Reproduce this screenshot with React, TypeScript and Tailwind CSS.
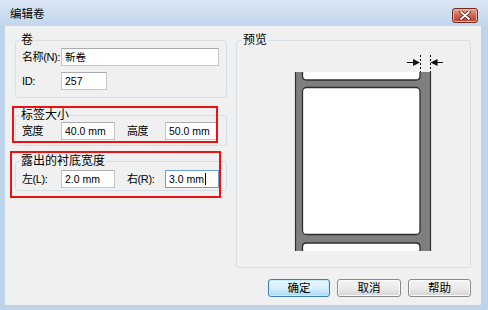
import React from "react";

const font = "font-['Liberation_Sans','Noto_Sans_CJK_SC',sans-serif]";

function Field({ w, value, focus }: { w: string; value: string; focus?: boolean }) {
  return (
    <div
      className={`${w} shrink-0 h-[18px] bg-white border ${
        focus ? "border-[#6f9fd0]" : "border-[#c3c7cc] border-t-[#a9adb3]"
      } flex items-center pl-[3px] text-[10.5px] leading-[12px] text-black whitespace-nowrap ${font}`}
    >
      <span>{value}</span>
      {focus && <span className="ml-[1px] w-[1px] h-[12px] bg-black" />}
    </div>
  );
}

function Label({ w, text }: { w: string; text: string }) {
  return (
    <span className={`${w} shrink-0 whitespace-nowrap text-[11px] tracking-[-0.4px] leading-[14px] text-black`}>
      {text}
    </span>
  );
}

function Btn({ label, w, def }: { label: string; w: string; def?: boolean }) {
  return (
    <div
      className={`${w} h-[18px] rounded-[3px] border flex items-center justify-center text-[11.5px] leading-[14px] text-black ${font} ${
        def
          ? "border-[#3c7fb1] bg-gradient-to-b from-[#eaf6fd] via-[#d9f0fc] to-[#a7d9f5] shadow-[inset_0_0_0_1px_#c8ecfc]"
          : "border-[#8a8a8a] bg-gradient-to-b from-[#f4f4f4] via-[#ebebeb] to-[#d4d4d4] shadow-[inset_0_0_0_1px_#fbfbfb]"
      }`}
    >
      {label}
    </div>
  );
}

function Preview() {
  return (
    <svg width="160" height="205" viewBox="0 0 160 205" className="block">
      <rect x="5" y="22" width="136" height="179" fill="#7f7f7f" />
      <line x1="5.5" y1="22" x2="5.5" y2="201" stroke="#2e2e2e" strokeWidth="1.2" />
      <line x1="140.5" y1="22" x2="140.5" y2="201" stroke="#2e2e2e" strokeWidth="1.2" />
      <path
        d="M12.5 22 L12.5 26 Q12.5 30 16.5 30 L126 30 Q130 30 130 26 L130 22"
        fill="#ffffff"
        stroke="#2e2e2e"
        strokeWidth="1.3"
      />
      <rect x="12.5" y="37.5" width="117.5" height="147" rx="4" fill="#ffffff" stroke="#2e2e2e" strokeWidth="1.3" />
      <path
        d="M12.5 201 L12.5 197 Q12.5 193 16.5 193 L126 193 Q130 193 130 197 L130 201"
        fill="#ffffff"
        stroke="#2e2e2e"
        strokeWidth="1.3"
      />
      <line x1="130.5" y1="5" x2="130.5" y2="22" stroke="#111" strokeWidth="1" strokeDasharray="2 2" />
      <line x1="140.5" y1="5" x2="140.5" y2="22" stroke="#111" strokeWidth="1" strokeDasharray="2 2" />
      <line x1="117" y1="12.5" x2="126" y2="12.5" stroke="#111" strokeWidth="1" />
      <polygon points="130,12.5 123,9 123,16" fill="#111" />
      <line x1="144" y1="12.5" x2="153" y2="12.5" stroke="#111" strokeWidth="1" />
      <polygon points="140.5,12.5 147.5,9 147.5,16" fill="#111" />
    </svg>
  );
}

export default function App() {
  return (
    <div className={`relative w-[488px] h-[310px] bg-[#bcd3ea] flex flex-col overflow-hidden ${font}`}>
      <div className="h-[25px] flex items-center bg-gradient-to-b from-[#dae6f4] to-[#c3d7ed] pl-[10px] pr-[10px]">
        <span className="text-[11.5px] leading-[14px] text-black mt-[2px]">编辑卷</span>
        <div className="ml-auto mt-[5px] w-[26px] h-[15px] rounded-[3px] border border-[#6e2b22] bg-gradient-to-b from-[#e9a797] via-[#d0624e] to-[#b6412f] flex items-center justify-center shadow-[inset_0_0_0_1px_#eeb0a2]">
          <svg width="12" height="9" viewBox="0 0 12 9">
            <path d="M2 1 L10 8 M10 1 L2 8" stroke="#5a1a12" strokeWidth="3.4" strokeLinecap="round" />
            <path d="M2 1 L10 8 M10 1 L2 8" stroke="#ffffff" strokeWidth="1.8" strokeLinecap="round" />
          </svg>
        </div>
      </div>

      <div className="ml-[5px] w-[476px] h-[280px] bg-[#f0f0f0] border-t border-[#c9d6e4] flex flex-col">
        <div className="flex pt-[7px] pl-[10px]">
          <div className="w-[212px] flex flex-col">
            <fieldset className="border border-[#d5dfe5] rounded-[3px] pl-[6px] pr-[6px] pb-[7px]">
              <legend className="ml-[-2px] px-[1px] text-[12px] leading-[14px] text-black">卷</legend>
              <div className="flex items-center mt-[1px]">
                <Label w="w-[39px]" text="名称(N):" />
                <Field w="w-[158px]" value="新卷" />
              </div>
              <div className="flex items-center mt-[6px]">
                <Label w="w-[39px]" text="ID:" />
                <Field w="w-[46px]" value="257" />
              </div>
            </fieldset>

            <fieldset className="mt-[10px] border border-[#d5dfe5] rounded-[3px] pl-[6px] pr-[6px] pb-[5px]">
              <legend className="ml-[-2px] px-[1px] text-[12px] leading-[14px] text-black">标签大小</legend>
              <div className="flex items-center">
                <Label w="w-[39px]" text="宽度" />
                <Field w="w-[54px]" value="40.0 mm" />
                <span className="w-[12px] shrink-0" />
                <Label w="w-[38px]" text="高度" />
                <Field w="w-[52px]" value="50.0 mm" />
              </div>
            </fieldset>

            <fieldset className="mt-[8px] border border-[#d5dfe5] rounded-[3px] pl-[6px] pr-[6px] pb-[2px]">
              <legend className="ml-[-2px] px-[1px] text-[12px] leading-[14px] text-black">露出的衬底宽度</legend>
              <div className="flex items-center mt-[2px]">
                <Label w="w-[39px]" text="左(L):" />
                <Field w="w-[54px]" value="2.0 mm" />
                <span className="w-[12px] shrink-0" />
                <Label w="w-[38px]" text="右(R):" />
                <Field w="w-[54px]" value="3.0 mm" focus />
              </div>
            </fieldset>
          </div>

          <fieldset className="ml-[9px] w-[235px] h-[235px] border border-[#d5dfe5] rounded-[3px] p-0">
            <legend className="ml-[5px] px-[1px] text-[12px] leading-[14px] text-black">预览</legend>
            <div className="ml-[53px] mt-[3px]">
              <Preview />
            </div>
          </fieldset>
        </div>

        <div className="flex justify-end gap-[7px] pr-[10px] mt-[11px]">
          <Btn label="确定" w="w-[62px]" def />
          <Btn label="取消" w="w-[64px]" />
          <Btn label="帮助" w="w-[63px]" />
        </div>
      </div>

      <div className="absolute left-[12px] top-[106px] w-[206px] h-[37px] border-2 border-[#ee1111]" />
      <div className="absolute left-[10px] top-[151px] w-[211px] h-[47px] border-2 border-[#ee1111]" />
    </div>
  );
}
